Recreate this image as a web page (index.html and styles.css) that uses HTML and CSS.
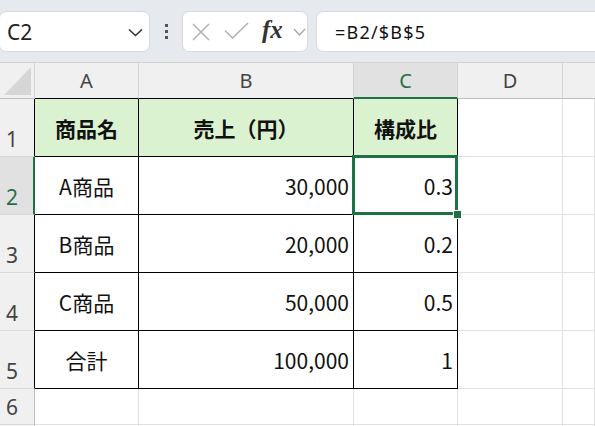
FILE: index.html
```html
<!DOCTYPE html>
<html lang="ja">
<head>
  <meta charset="UTF-8" />
  <title>構成比</title>
  <link rel="stylesheet" href="styles.css">
</head>
<body>

  <!-- 数式バー -->
  <div class="toolbar">
    <div class="namebox">
      <span class="ref">C2</span>
      <svg class="chev" width="15" height="9" viewBox="0 0 15 9"><path d="M1 1.5 L7.5 7.5 L14 1.5" fill="none" stroke="#333" stroke-width="1.6"/></svg>
    </div>
    <div class="dots"><i></i><i></i><i></i></div>
    <div class="fxbox">
      <svg class="ico-x" width="18" height="18" viewBox="0 0 18 18"><path d="M1 1 L17 17 M17 1 L1 17" stroke="#b3b3b3" stroke-width="1.6"/></svg>
      <svg class="ico-ok" width="25" height="17" viewBox="0 0 25 17"><path d="M1 8.5 L8.5 16 L24 1" fill="none" stroke="#b3b3b3" stroke-width="1.6"/></svg>
      <span class="fx">fx</span>
      <svg class="chev-s" width="13" height="8" viewBox="0 0 13 8"><path d="M1 1 L6.5 7 L12 1" fill="none" stroke="#aaa" stroke-width="1.4"/></svg>
    </div>
    <div class="formula">=B2/$B$5</div>
  </div>

  <!-- シート -->
  <div class="sheet">
    <div class="corner"><span class="tri"></span></div>
    <div class="hd dark">A</div>
    <div class="hd dark">B</div>
    <div class="hd active">C</div>
    <div class="hd">D</div>
    <div class="hd last"></div>

    <div class="rh tbl">1</div>
    <div class="cell t head">商品名</div>
    <div class="cell t head">売上（円）</div>
    <div class="cell t head">構成比</div>
    <div class="cell"></div>
    <div class="cell"></div>

    <div class="rh active">2</div>
    <div class="cell t">A商品</div>
    <div class="cell t num">30,000</div>
    <div class="cell t num selected">0.3<span class="handle"></span></div>
    <div class="cell"></div>
    <div class="cell"></div>

    <div class="rh tbl">3</div>
    <div class="cell t">B商品</div>
    <div class="cell t num">20,000</div>
    <div class="cell t num">0.2</div>
    <div class="cell"></div>
    <div class="cell"></div>

    <div class="rh tbl">4</div>
    <div class="cell t">C商品</div>
    <div class="cell t num">50,000</div>
    <div class="cell t num">0.5</div>
    <div class="cell"></div>
    <div class="cell"></div>

    <div class="rh tbl">5</div>
    <div class="cell t">合計</div>
    <div class="cell t num">100,000</div>
    <div class="cell t num">1</div>
    <div class="cell"></div>
    <div class="cell"></div>

    <div class="rh">6</div>
    <div class="cell"></div>
    <div class="cell"></div>
    <div class="cell"></div>
    <div class="cell"></div>
    <div class="cell"></div>

    <div class="rh"></div>
    <div class="cell"></div>
    <div class="cell"></div>
    <div class="cell"></div>
    <div class="cell"></div>
    <div class="cell"></div>
  </div>

</body>
</html>
```

FILE: styles.css
```css
html, body {
  margin: 0;
  padding: 0;
  height: 100%;
  overflow: hidden;
}

body {
  background: #e6e9ee;
  font-family: "Noto Sans CJK JP", "Noto Sans", sans-serif;
  color: #111;
}

/* ---- 数式バー ---- */
.toolbar {
  height: 62px;
  box-sizing: border-box;
  padding-top: 11px;
  display: flex;
  align-items: flex-start;
}

.namebox,
.fxbox,
.formula {
  height: 41px;
  box-sizing: border-box;
  background: #fff;
  border: 1px solid #d6d9de;
  border-radius: 7px;
  display: flex;
  align-items: center;
}

.namebox {
  width: 151px;
  margin-left: -1px;
  padding: 0 6px 0 7px;
  justify-content: space-between;
}

.ref {
  font-family: "Noto Sans", sans-serif;
  font-size: 21px;
  color: #222;
}

.chev {
  margin-top: 1px;
}

.dots {
  width: 32px;
  height: 41px;
  display: flex;
  flex-direction: column;
  align-items: center;
  justify-content: center;
  gap: 3px;
}

.dots i {
  display: block;
  width: 3px;
  height: 3px;
  background: #555;
}

.fxbox {
  width: 126px;
  padding-left: 9px;
}

.ico-x {
  margin-right: 14px;
}

.ico-ok {
  margin-right: 13px;
  margin-top: -3px;
}

.fx {
  font-family: "Liberation Serif", serif;
  font-style: italic;
  font-weight: bold;
  font-size: 25px;
  color: #333;
  width: 22px;
  margin-top: -4px;
}

.chev-s {
  margin-left: 9px;
}

.formula {
  flex: 1;
  margin-left: 8px;
  margin-right: -10px;
  padding-left: 18px;
  font-family: "Noto Sans", sans-serif;
  font-size: 18px;
  letter-spacing: 1.2px;
  color: #111;
}

/* ---- シート ---- */
.sheet {
  height: 364px;
  display: grid;
  grid-template-columns: 35px 104px 215px 104px 105px 1fr;
  grid-template-rows: 37px repeat(5, 58px) 36px 1fr;
  background: #fff;
}

.sheet > div {
  box-sizing: border-box;
  border-right: 1px solid #e1e1e1;
  border-bottom: 1px solid #e1e1e1;
  position: relative;
}

.corner,
.hd {
  background: #f0f0f0;
  border-top: 1px solid #d2d2d2;
}

.corner {
  border-right-color: #d4d4d4 !important;
  border-bottom-color: #bdbdbd !important;
}

.tri {
  position: absolute;
  left: 4px;
  top: 4px;
  width: 27px;
  height: 28px;
  background: #d6d6d6;
  clip-path: polygon(100% 0, 100% 100%, 0 100%);
}

.hd {
  display: flex;
  align-items: center;
  justify-content: center;
  font-family: "Noto Sans", sans-serif;
  font-size: 20px;
  color: #444;
  border-right-color: #d4d4d4 !important;
  border-bottom-color: #bdbdbd !important;
}

.hd.dark {
  border-bottom-color: #000 !important;
}

.hd.active {
  background: #e1e1e1;
  color: #1f7145;
  border-bottom: 2px solid #1f7145 !important;
}

.hd.last {
  border-right: none;
}

.rh {
  background: #f0f0f0;
  display: flex;
  align-items: flex-end;
  padding: 0 0 6px 6px;
  font-family: "Noto Sans", sans-serif;
  font-size: 21px;
  line-height: 1;
  color: #444;
  border-right-color: #bdbdbd !important;
  border-bottom-color: #d9d9d9 !important;
}

.rh.tbl {
  border-right-color: #000 !important;
}

.rh.active {
  background: #e1e1e1;
  color: #1f7145;
  border-right: 2px solid #1f7145 !important;
}

.cell {
  display: flex;
  align-items: center;
  justify-content: center;
  font-size: 21px;
}

.cell.t {
  border-right-color: #000;
  border-bottom-color: #000;
}

.cell.head {
  background: #daf2d0;
  font-weight: bold;
}

.cell.num {
  justify-content: flex-end;
  padding-right: 4px;
}

/* 選択セル */
.selected::after {
  content: "";
  position: absolute;
  top: -2px;
  left: -2px;
  right: -1px;
  bottom: -1px;
  border: 3px solid #1f7145;
  pointer-events: none;
}

.handle {
  position: absolute;
  left: 99px;
  top: 53px;
  width: 7px;
  height: 7px;
  background: #1f7145;
  border: 1px solid #fff;
  z-index: 2;
}
```
